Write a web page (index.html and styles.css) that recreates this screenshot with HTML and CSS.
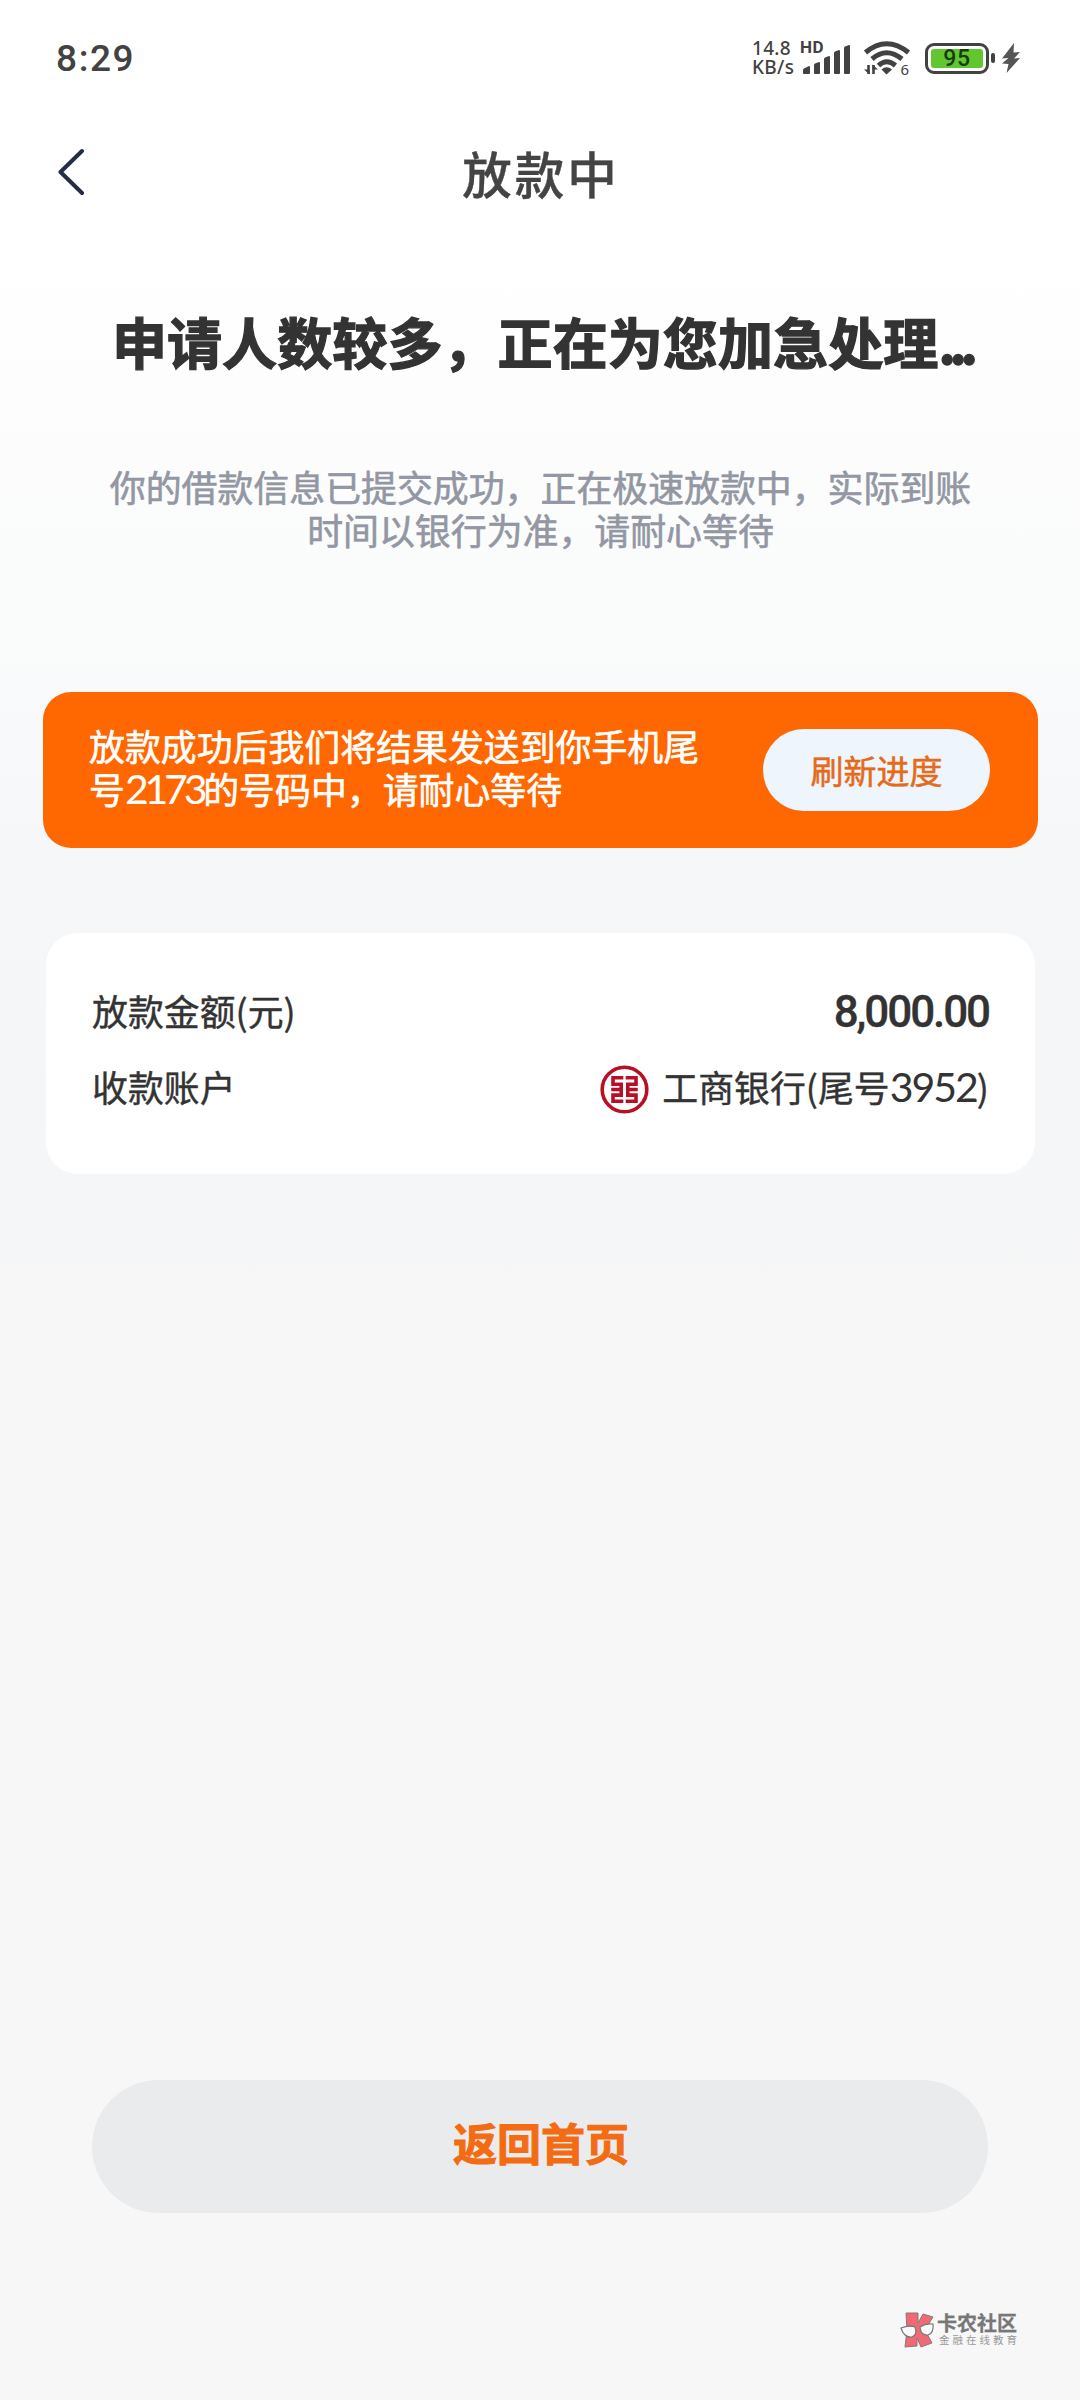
FILE: index.html
```html
<!DOCTYPE html>
<html lang="zh-CN">
<head>
<meta charset="utf-8">
<title>放款中</title>
<link rel="stylesheet" href="styles.css">
</head>
<body>
<div class="screen">
  <header class="status">
    <span class="time">8:29</span>
    <div class="indicators">
      <div class="speed"><span>14.8</span><span>KB/s</span></div>
      <div class="signal">
        <span class="hd">HD</span>
        <svg width="50" height="34" viewBox="0 0 50 34" fill="#424242">
          <path d="M1 32v-3q0-1 1-1.500l5-2.500q1 0 1 1v6q0 1-1 1H2q-1 0-1-1z"/>
          <path d="M12 24q0-1 1-1.500l4-1.500q1 0 1 1v10q0 1-1 1h-4q-1 0-1-1z"/>
          <path d="M22 18q0-1 1-1.500l4-1.500q1 0 1 1v16q0 1-1 1h-4q-1 0-1-1z"/>
          <path d="M32 12q0-1 1-1.500l4-1.500q1 0 1 1v22q0 1-1 1h-4q-1 0-1-1z"/>
          <path d="M42 7q0-1 1-1.500l4-1.500q1 0 1 1v27q0 1-1 1h-4q-1 0-1-1z"/>
        </svg>
      </div>
      <div class="wifi">
        <svg width="48" height="36" viewBox="0 0 48 36" fill="none" stroke="#424242">
          <path d="M2.500 12.500Q23.500-5 45.500 12.500" stroke-width="5"/>
          <path d="M9 19Q23.500 6.500 39 19" stroke-width="5"/>
          <path d="M15.500 25.500Q23.500 18 32.500 25.500" stroke-width="5"/>
          <path d="M18.500 29.500Q23.500 25 29 29.500L23.500 34.500z" fill="#424242" stroke="none"/>
          <path d="M5.500 25v9M10.500 34v-9" stroke-width="2.600"/>
          <path d="M1 29.500h5.500v5zM9.500 24.500v5H15z" fill="#424242" stroke="none"/>
        </svg>
        <span class="wifi-gen">6</span>
      </div>
      <div class="battery"><span class="level">95</span></div>
      <svg class="bolt" width="18" height="32" viewBox="0 0 18 32"><path d="M12 1L0 16.500l6.500-.5L0 21.500l6.500.5L4.500 31 18 16l-6 .500 6-6.500-6.500.5z" fill="#555"/></svg>
    </div>
  </header>

  <nav class="nav">
    <svg class="back" width="28" height="50" viewBox="0 0 28 50" fill="none" stroke="#232d45" stroke-width="4" stroke-linecap="round" stroke-linejoin="round"><path d="M24 4L2.500 25 24 46"/></svg>
    <h1 class="nav-title">放款中</h1>
  </nav>

  <main class="content">
    <h2 class="headline">申请人数较多，正在为您加急处理<span class="dots">...</span></h2>
    <p class="desc">你的借款信息已提交成功，正在极速放款中，实际到账<br>时间以银行为准，请耐心等待</p>

    <section class="notice">
      <p class="notice-text">放款成功后我们将结果发送到你手机尾<br>号<span class="tail">2173</span>的号码中，请耐心等待</p>
      <button class="refresh">刷新进度</button>
    </section>

    <section class="card">
      <div class="row">
        <span class="label">放款金额(元)</span>
        <span class="amount">8,000.00</span>
      </div>
      <div class="row">
        <span class="label">收款账户</span>
        <span class="account">
          <svg class="bank" width="50" height="50" viewBox="0 0 50 50" fill="none" stroke="#b90f26">
            <circle cx="24.500" cy="24.500" r="22.300" stroke-width="3.600"/>
            <path d="M23.300 12.700H13v6.500h8.200v5.300H11.200M21.200 24.500v5.600H13v6.200h10.300" stroke-width="3.600"/>
            <path d="M25.700 12.700H36v6.500h-8.200v5.300h10M27.800 24.500v5.600H36v6.200H25.700" stroke-width="3.600"/>
          </svg>
          <span class="label">工商银行(尾号<span class="num">3952</span>)</span>
        </span>
      </div>
    </section>
  </main>

  <footer class="footer">
    <button class="home">返回首页</button>
    <div class="brand">
      <svg width="36" height="36" viewBox="0 0 36 36">
        <path d="M6 1h12v10l5-9 10 3-8 13 7 13-11 4-4-9v8L5 35l2-17z" fill="#ee6b76" stroke="#8d7777" stroke-width="1"/>
        <path d="M1 16q8-3 14-1 3 7-3 10-8 1-11-9zM20 15q6-4 13-3 1 9-5 11-7 1-8-8z" fill="#fafafa" stroke="#777" stroke-width="1.200"/>
      </svg>
      <div class="brand-text"><span class="brand-name">卡农社区</span><span class="brand-sub">金融在线教育</span></div>
    </div>
  </footer>
</div>
</body>
</html>
```
FILE: styles.css
```css
* { box-sizing: border-box; }
body { margin: 0; }
h1, h2, p { margin: 0; }
button { border: 0; padding: 0; font-family: inherit; }
svg { display: block; flex: none; }

.screen {
  width: 1080px;
  height: 2400px;
  display: flex;
  flex-direction: column;
  font-family: "Noto Sans CJK SC", sans-serif;
  color: #333;
  background: linear-gradient(#fff 0, #fff 250px, #fdfdfd 400px, #fafbfb 620px, #f5f7f9 850px, #f5f6f8 1100px, #f7f7f7 1400px, #f7f7f7 100%);
}

.status {
  height: 116px;
  padding: 0 60px 0 56px;
  display: flex;
  align-items: center;
  justify-content: space-between;
  font-family: Roboto, sans-serif;
  color: #424242;
}
.time { font-size: 37px; font-weight: 500; letter-spacing: 1.6px; }
.indicators { display: flex; align-items: center; }
.speed {
  width: 50px;
  display: flex;
  flex-direction: column;
  font: 500 19px/19px "Noto Sans", sans-serif;
  letter-spacing: .3px;
}
.signal { position: relative; height: 34px; }
.hd {
  position: absolute;
  left: -2px;
  top: -1px;
  font: 700 17px/15px Roboto, sans-serif;
  letter-spacing: .5px;
}
.wifi { position: relative; margin-left: 11px; }
.wifi-gen {
  position: absolute;
  right: 2px;
  bottom: -1px;
  font: 15px/15px "Noto Sans", sans-serif;
}
.battery {
  position: relative;
  width: 64px;
  height: 31px;
  margin-left: 14px;
  padding: 3px;
  border: 3px solid #424242;
  border-radius: 9px;
}
.battery::after {
  content: "";
  position: absolute;
  right: -9px;
  top: 7px;
  width: 4px;
  height: 10px;
  border-radius: 2px;
  background: #424242;
}
.level {
  display: block;
  height: 19px;
  border-radius: 3px;
  background: #61c62f;
  color: #173d0c;
  font: 500 23px/20px Roboto, sans-serif;
  letter-spacing: .8px;
  text-align: center;
}
.bolt { margin-left: 13px; }

.nav {
  height: 118px;
  display: grid;
  grid-template-columns: 120px 1fr 120px;
  align-items: center;
}
.back { margin: -6px 0 0 58px; }
.nav-title {
  margin-top: -5px;
  padding-left: 2px;
  font-size: 49.500px;
  font-weight: 500;
  line-height: 70px;
  letter-spacing: 3px;
  text-align: center;
  color: #444;
  -webkit-text-stroke: .4px;
}

.headline {
  margin-top: 66px;
  padding-left: 3px;
  font-size: 55.100px;
  font-weight: 700;
  line-height: 80px;
  text-align: center;
  white-space: nowrap;
  -webkit-text-stroke: 1.300px;
}
.dots { letter-spacing: -7px; }
.desc {
  margin-top: 85px;
  padding-left: 1px;
  font-size: 35.900px;
  line-height: 43px;
  text-align: center;
  color: #9297a3;
  -webkit-text-stroke: .6px;
}

.notice {
  height: 156px;
  margin: 141px 42px 0 43px;
  padding: 0 48px 0 46px;
  display: flex;
  align-items: center;
  justify-content: space-between;
  border-radius: 28px;
  background: #ff6700;
  color: #fff;
}
.notice-text {
  margin-top: -6px;
  font-size: 35.900px;
  line-height: 43px;
  white-space: nowrap;
  -webkit-text-stroke: .6px;
}
.tail { font-family: Lato, sans-serif; font-size: 41px; line-height: 1; letter-spacing: -4.200px; -webkit-text-stroke: 0; }
.refresh {
  width: 227px;
  height: 82px;
  border-radius: 41px;
  background: #eff5fd;
  color: #e36b19;
  font-size: 33px;
  line-height: 81px;
  -webkit-text-stroke: .5px;
}

.card {
  height: 241px;
  margin: 85px 45px 0 46px;
  padding: 41px 46px;
  border-radius: 32px;
  background: #fff;
  font-size: 35.900px;
}
.row { height: 76px; display: flex; align-items: center; justify-content: space-between; }
.label { margin-top: -4px; -webkit-text-stroke: .4px; }
.amount { font: 500 44px/60px Roboto, sans-serif; letter-spacing: -2.100px; -webkit-text-stroke: .3px; }
.account { display: flex; align-items: center; gap: 12px; }
.bank { margin-top: 3px; }
.num { font-family: Lato, sans-serif; font-size: 41px; line-height: 1; letter-spacing: -2px; -webkit-text-stroke: 0; }

.footer { margin-top: auto; height: 320px; }
.home {
  display: block;
  width: 896px;
  height: 133px;
  margin-left: 92px;
  padding: 0 0 10px 2px;
  border-radius: 67px;
  background: #eaebed;
  color: #f36b12;
  font-size: 44px;
  font-weight: 700;
  line-height: 120px;
  -webkit-text-stroke: 1px;
}
.brand {
  display: flex;
  align-items: center;
  margin: 99px 0 0 900px;
  color: #777;
}
.brand-text { display: flex; flex-direction: column; margin-left: 1px; }
.brand-name { font-size: 20px; font-weight: 700; line-height: 20px; -webkit-text-stroke: .3px; }
.brand-sub { margin-left: 2px; font-size: 10.500px; line-height: 14px; letter-spacing: 3px; color: #999; }
```
